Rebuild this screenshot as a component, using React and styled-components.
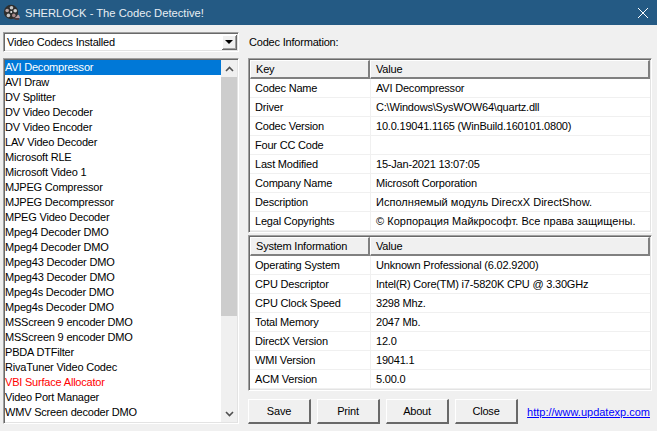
import React from 'react'
import styled, { createGlobalStyle } from 'styled-components'

const GlobalStyle = createGlobalStyle`
    html, body { margin:0; padding:0; height:100%; overflow:hidden; }
    body { font-family:"Liberation Sans", Arial, sans-serif; font-size:11px; letter-spacing:-0.2px; color:#000; background:#f0f0f0; }
`
const Window = styled.div`
    width:657px;
    height:431px;
    display:flex;
    flex-direction:column;
    overflow:hidden;
`
const TitleBar = styled.div`
    height:25px;
    flex:none;
    background:#245a84;
    display:flex;
    align-items:center;
    padding-left:3px;
`
const TitleText = styled.span`
    margin-left:4px;
    font-size:11.2px;
    letter-spacing:0;
    color:#e8eef3;
`
const CloseButton = styled.div`
    margin-left:auto;
    width:29px;
    display:flex;
    justify-content:center;
`
const Body = styled.div`
    flex:1;
    min-height:0;
    display:flex;
    gap:9px;
    padding:7px 5px 7px 3px;
`
const LeftColumn = styled.div`
    width:236px;
    flex:none;
    display:flex;
    flex-direction:column;
    gap:6px;
`
const RightColumn = styled.div`
    flex:1;
    min-width:0;
    display:flex;
    flex-direction:column;
`
const Sunken = styled.div`
    background:#fff;
    box-sizing:border-box;
    padding:1px;
    border:1px solid;
    border-color:#a0a0a0 #fff #fff #a0a0a0;
    box-shadow:inset 1px 1px 0 #696969, inset -1px -1px 0 #e3e3e3;
`
const Combo = styled(Sunken)`
    height:20px;
    display:flex;
    align-items:center;
    padding-left:3px;
`
const ComboArrow = styled.div`
    margin-left:auto;
    width:15px;
    height:15px;
    background:#f0f0f0;
    border-right:1px solid #696969;
    border-bottom:1px solid #696969;
    box-sizing:border-box;
    box-shadow:inset 1px 1px 0 #fff, inset -1px -1px 0 #a0a0a0;
    display:flex;
    align-items:center;
    justify-content:center;
    &::after {
        content:"";
        border-left:4px solid transparent;
        border-right:4px solid transparent;
        border-top:4px solid #000;
    }
`
const ListBox = styled(Sunken)`
    flex:1;
    min-height:0;
    display:flex;
    overflow:hidden;
`
const Items = styled.div`
    flex:1;
    min-width:0;
    overflow:hidden;
`
const Item = styled.div`
    height:15px;
    line-height:15px;
    white-space:nowrap;
    color:${p => (p.$selected ? '#fff' : p.$red ? '#ff0000' : '#000')};
    background:${p => (p.$selected ? '#0078d7' : 'transparent')};
`
const ScrollBar = styled.div`
    width:16px;
    flex:none;
    background:#f0f0f0;
    display:flex;
    flex-direction:column;
`
const ScrollArrow = styled.div`
    height:17px;
    flex:none;
    display:flex;
    align-items:center;
    justify-content:center;
`
const ScrollTrack = styled.div`
    flex:1;
`
const ScrollThumb = styled.div`
    height:239px;
    background:#cdcdcd;
`
const SectionLabel = styled.div`
    height:26px;
    line-height:14px;
    padding:3px 0 0 1px;
    box-sizing:border-box;
`
const Table = styled(Sunken)`
    flex:none;
    display:flex;
    flex-direction:column;
    & + & { margin-top:2px; }
`
const HeaderRow = styled.div`
    display:grid;
    grid-template-columns:120px 1fr;
    height:18px;
    flex:none;
    margin-bottom:1px;
`
const HeaderCell = styled.div`
    background:#f0f0f0;
    box-sizing:border-box;
    border-top:1px solid #fff;
    border-left:1px solid #fff;
    border-right:2px solid #808080;
    border-bottom:2px solid #808080;
    padding-left:5px;
    line-height:16px;
    white-space:nowrap;
`
const Row = styled.div`
    display:grid;
    grid-template-columns:120px 1fr;
    height:19px;
    flex:none;
    box-sizing:border-box;
    border-bottom:1px solid #f0f0f0;
`
const Cell = styled.div`
    padding-left:5px;
    line-height:19px;
    white-space:nowrap;
    letter-spacing:${p => (p.$cyrillic ? '0.03px' : 'inherit')};
    & + & { border-left:1px solid #f0f0f0; }
`
const ButtonRow = styled.div`
    height:25px;
    flex:none;
    margin-top:8px;
    display:flex;
    align-items:center;
    gap:6px;
`
const Button = styled.div`
    width:63px;
    height:25px;
    box-sizing:border-box;
    background:#f0f0f0;
    border-style:solid;
    border-width:1px 2px 2px 1px;
    border-color:#fff #696969 #696969 #fff;
    display:flex;
    align-items:center;
    justify-content:center;
`
const Link = styled.a`
    margin-left:auto;
    margin-right:2px;
    letter-spacing:0;
    color:#0000ff;
    text-decoration:underline;
`

const codecs = [
    'AVI Decompressor', 'AVI Draw', 'DV Splitter', 'DV Video Decoder', 'DV Video Encoder',
    'LAV Video Decoder', 'Microsoft RLE', 'Microsoft Video 1', 'MJPEG Compressor',
    'MJPEG Decompressor', 'MPEG Video Decoder', 'Mpeg4 Decoder DMO', 'Mpeg4 Decoder DMO',
    'Mpeg43 Decoder DMO', 'Mpeg43 Decoder DMO', 'Mpeg4s Decoder DMO', 'Mpeg4s Decoder DMO',
    'MSScreen 9 encoder DMO', 'MSScreen 9 encoder DMO', 'PBDA DTFilter', 'RivaTuner Video Codec',
    'VBI Surface Allocator', 'Video Port Manager', 'WMV Screen decoder DMO', 'WMV Screen encoder DMO',
]

const codecInfo = [
    ['Codec Name', 'AVI Decompressor'],
    ['Driver', 'C:\\Windows\\SysWOW64\\quartz.dll'],
    ['Codec Version', '10.0.19041.1165 (WinBuild.160101.0800)'],
    ['Four CC Code', ''],
    ['Last Modified', '15-Jan-2021 13:07:05'],
    ['Company Name', 'Microsoft Corporation'],
    ['Description', 'Исполняемый модуль DirecxX DirectShow.'],
    ['Legal Copyrights', '© Корпорация Майкрософт. Все права защищены.'],
]

const systemInfo = [
    ['Operating System', 'Unknown Professional (6.02.9200)'],
    ['CPU Descriptor', 'Intel(R) Core(TM) i7-5820K CPU @ 3.30GHz'],
    ['CPU Clock Speed', '3298 Mhz.'],
    ['Total Memory', '2047 Mb.'],
    ['DirectX Version', '12.0'],
    ['WMI Version', '19041.1'],
    ['ACM Version', '5.00.0'],
]

function ReelIcon() {
    return (
        <svg width="18" height="17" viewBox="0 0 18 17">
            <path d="M6 13 L13 15 L17 14 L16 11 L10 10 Z" fill="#b9a0a6" />
            <path d="M9 14 L13 16 L16 16 L16 14 Z" fill="#4a3a40" />
            <circle cx="8" cy="8" r="7.2" fill="#2e2e2e" />
            <circle cx="8.5" cy="3.8" r="1.8" fill="#c8c8c8" />
            <circle cx="4.2" cy="6.5" r="1.8" fill="#b8a4a4" />
            <circle cx="12.2" cy="6.8" r="1.8" fill="#d2d2d2" />
            <circle cx="5.4" cy="11.4" r="1.8" fill="#c4c4c4" />
            <circle cx="10.8" cy="11.4" r="1.8" fill="#a88a8a" />
            <circle cx="8.2" cy="8" r="1" fill="#eeeeee" />
        </svg>
    )
}

function InfoTable({ title, rows }) {
    return (
        <Table>
            <HeaderRow>
                <HeaderCell>{title}</HeaderCell>
                <HeaderCell>Value</HeaderCell>
            </HeaderRow>
            {rows.map(([key, value]) => (
                <Row key={key}>
                    <Cell>{key}</Cell>
                    <Cell $cyrillic={/[А-я]/.test(value)}>{value}</Cell>
                </Row>
            ))}
        </Table>
    )
}

export default function App() {
    return (
        <Window>
            <GlobalStyle />
            <TitleBar>
                <ReelIcon />
                <TitleText>SHERLOCK - The Codec Detective!</TitleText>
                <CloseButton>
                    <svg width="10" height="10" viewBox="0 0 10 10">
                        <path d="M0 0 L10 10 M10 0 L0 10" stroke="#fff" strokeWidth="1" />
                    </svg>
                </CloseButton>
            </TitleBar>
            <Body>
                <LeftColumn>
                    <Combo>
                        Video Codecs Installed
                        <ComboArrow />
                    </Combo>
                    <ListBox>
                        <Items>
                            {codecs.map((name, i) => (
                                <Item key={name + i} $selected={i === 0} $red={name.startsWith('VBI')}>{name}</Item>
                            ))}
                        </Items>
                        <ScrollBar>
                            <ScrollArrow>
                                <svg width="9" height="6" viewBox="0 0 9 6"><path d="M1 5 L4.5 1.5 L8 5" fill="none" stroke="#505050" strokeWidth="1.6" /></svg>
                            </ScrollArrow>
                            <ScrollTrack><ScrollThumb /></ScrollTrack>
                            <ScrollArrow>
                                <svg width="9" height="6" viewBox="0 0 9 6"><path d="M1 1 L4.5 4.5 L8 1" fill="none" stroke="#505050" strokeWidth="1.6" /></svg>
                            </ScrollArrow>
                        </ScrollBar>
                    </ListBox>
                </LeftColumn>
                <RightColumn>
                    <SectionLabel>Codec Information:</SectionLabel>
                    <InfoTable title="Key" rows={codecInfo} />
                    <InfoTable title="System Information" rows={systemInfo} />
                    <ButtonRow>
                        <Button>Save</Button>
                        <Button>Print</Button>
                        <Button>About</Button>
                        <Button>Close</Button>
                        <Link href="#">http://www.updatexp.com</Link>
                    </ButtonRow>
                </RightColumn>
            </Body>
        </Window>
    )
}
